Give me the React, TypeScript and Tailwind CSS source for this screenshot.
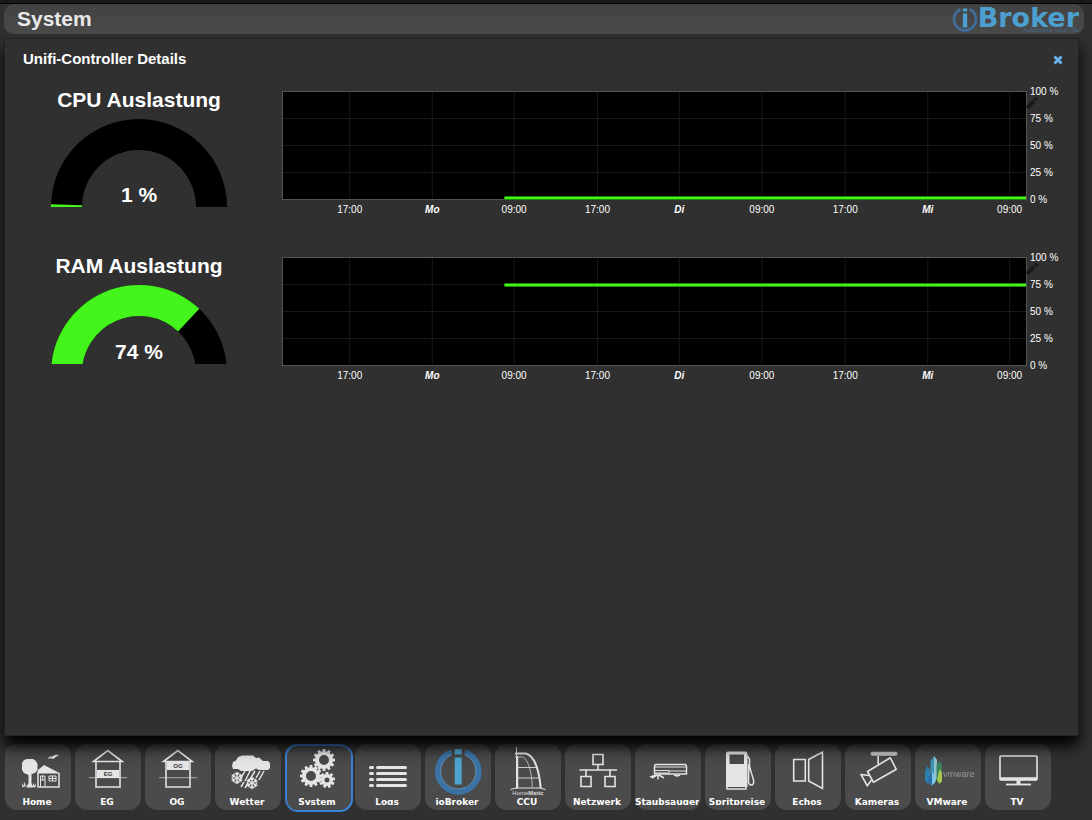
import type { ReactNode } from "react";

const TICKS = [
  { at: "9.1%", label: "17:00" },
  { at: "20.2%", label: "Mo", day: true },
  { at: "31.2%", label: "09:00" },
  { at: "42.4%", label: "17:00" },
  { at: "53.4%", label: "Di", day: true },
  { at: "64.5%", label: "09:00" },
  { at: "75.7%", label: "17:00" },
  { at: "86.8%", label: "Mi", day: true },
  { at: "97.8%", label: "09:00" },
];

const LEVELS = [100, 75, 50, 25, 0];

function Gauge({ title, value, cut = 0 }: { title: string; value: number; cut?: number }) {
  const cx = 88;
  const outer = 88;
  const inner = 57;

  // Ring segment between two fractions of the half circle
  const segment = (from: number, to: number) => {
    const a = Math.PI * (1 - from);
    const b = Math.PI * (1 - to);
    const p = (r: number, t: number) => `${cx + r * Math.cos(t)} ${88 - r * Math.sin(t)}`;
    return `M${p(outer, a)} A${outer} ${outer} 0 0 1 ${p(outer, b)} L${p(inner, b)} A${inner} ${inner} 0 0 0 ${p(inner, a)} Z`;
  };

  return (
    <div className="flex w-[276px] shrink-0 flex-col items-center">
      <h3 className="mb-[7px] text-[21px] leading-6 font-bold">{title}</h3>
      <svg width={176} height={88 - cut} className="block" role="img" aria-label={`${title} ${value} %`}>
        <path d={segment(0, 1)} fill="#000" />
        <path d={segment(0, value / 100)} fill="#43f51a" />
        <text x={88} y={83 - cut} textAnchor="middle" className="fill-white text-[21px] font-bold">
          {value} %
        </text>
      </svg>
    </div>
  );
}

function Chart({ value }: { value: number }) {
  const y = 108 - value * 1.08;

  return (
    <div className="min-w-0 flex-1 pt-[3px] pr-[52px]">
      <svg width="100%" height={130} className="block overflow-visible">
        <rect x={0} y={0} width="100%" height={108} fill="#000" stroke="#555" shapeRendering="crispEdges" />
        {LEVELS.slice(1, 4).map((l) => (
          <line key={l} x1={1} x2="100%" y1={108.5 - l * 1.08} y2={108.5 - l * 1.08} stroke="#191919" />
        ))}
        {TICKS.map((t) => (
          <g key={t.at}>
            <line x1={t.at} x2={t.at} y1={1} y2={107} stroke="#191919" />
            <text
              x={t.at}
              y={122}
              textAnchor="middle"
              className={t.day ? "fill-white text-[10px] font-bold italic" : "fill-white text-[10px]"}
            >
              {t.label}
            </text>
          </g>
        ))}
        <line x1="29.9%" x2="100%" y1={y} y2={y} stroke="#1d8a0a" strokeWidth={4} />
        <line x1="29.9%" x2="100%" y1={y} y2={y} stroke="#43f51a" strokeWidth={2} />
        <svg x="100%" className="overflow-visible">
          <path d="M1 17 8 10M9 9 11 7" stroke="#1a1a1a" strokeWidth={4} />
          {LEVELS.map((l) => (
            <text key={l} x={4} y={112 - l * 1.08} className="fill-white text-[10px]">
              {l} %
            </text>
          ))}
        </svg>
      </svg>
    </div>
  );
}

function Gear({ x, y, r, hole, teeth }: { x: number; y: number; r: number; hole: number; teeth: number }) {
  const body = r - 2;
  return (
    <g transform={`translate(${x} ${y})`}>
      {Array.from({ length: teeth }, (_, i) => (
        <rect key={i} x={-1.4} y={-r} width={2.8} height={4} fill="#e4e4e4" transform={`rotate(${(360 / teeth) * i})`} />
      ))}
      <circle r={(body + hole) / 2} fill="none" stroke="#e4e4e4" strokeWidth={body - hole} />
    </g>
  );
}

function Flake({ x, y }: { x: number; y: number }) {
  return (
    <g transform={`translate(${x} ${y})`} stroke="#e4e4e4" strokeWidth={1.4} fill="none">
      {[0, 60, 120].map((a) => (
        <path key={a} d="M0-6V6M-2-5 0-3 2-5M-2 5 0 3 2 5" transform={`rotate(${a})`} />
      ))}
    </g>
  );
}

function House({ label, y }: { label: string; y: number }) {
  return (
    <g fill="none" stroke="#e4e4e4" strokeWidth={1.6}>
      <path d="M14 33.7H52" stroke="#aaa" strokeWidth={1} />
      <path d="M18.5 17.5 32.8 6.5 47.2 17.5Z" />
      <path d="M21 17.5V43H45V17.5" />
      <rect x={22} y={y} width={22} height={8} fill="#e4e4e4" stroke="none" />
      <text x={33} y={y + 6} textAnchor="middle" stroke="none" fill="#333" className="text-[6px] font-bold">
        {label}
      </text>
    </g>
  );
}

const ITEMS: { label: string; active?: boolean; icon: ReactNode }[] = [
  {
    label: "Home",
    icon: (
      <g fill="#e4e4e4">
        <path d="M19 16 22 15H28L31 17 32.5 20V26L30 29 26.5 30V39L28 43.5H21L23.5 39V31L19 29 17 26V19Z" />
        <path d="M17.5 43.5 17 39 19 42 19.5 37.5 21 42M27 43 29 38.5 29 42 31 39.5 30.5 43.5" />
        <path d="M32 29.5 33 26 39 21 55.5 29.5Z" />
        <path d="M33 29V43H54V29" fill="none" stroke="#e4e4e4" strokeWidth={1.5} />
        <path d="M35.5 43V32H40V43M35.5 36H40M37.7 32V36M44 32H51V37H44ZM47.5 32V37M44 34.5H51" fill="none" stroke="#e4e4e4" />
        <path d="M42.5 15C44 12.5 46 12 47.5 12.8 49 11 51 10.5 54 11 51.5 12.5 50 13.2 48.5 15 46.5 14 44.5 14 42.5 15Z" />
      </g>
    ),
  },
  { label: "EG", icon: <House label="EG" y={26} /> },
  { label: "OG", icon: <House label="OG" y={18} /> },
  {
    label: "Wetter",
    icon: (
      <g>
        <path d="M17 22 18 18 21 16.5 23 13 27 11.5H38L41 14 44 13.5 48 17H53L55 19V24L53 26H44L41 24.5 37 27H26L23 25H18Z" fill="#e4e4e4" />
        <path d="M30 27 26 34M35 27 30 37M40 27 34 37M45 27 41 34M49 27 44 36M29 38 26 43M33 39 30 44M28 30 24 37" stroke="#e4e4e4" strokeWidth={1.5} />
        <Flake x={22} y={34} />
        <Flake x={37} y={39} />
      </g>
    ),
  },
  {
    label: "System",
    active: true,
    icon: (
      <g>
        <Gear x={39} y={16} r={11} hole={5} teeth={12} />
        <Gear x={26} y={32} r={11} hole={5} teeth={12} />
        <Gear x={42} y={36} r={8} hole={2.5} teeth={9} />
      </g>
    ),
  },
  {
    label: "Logs",
    icon: (
      <g stroke="#e4e4e4" strokeWidth={3} strokeLinecap="round">
        {[23.5, 29.5, 35.5, 41.5].map((y) => (
          <path key={y} d={`M15.5 ${y}H17.5M22.5 ${y}H50.5`} />
        ))}
      </g>
    ),
  },
  {
    label: "ioBroker",
    icon: (
      <g fill="none">
        <path d="M26.5 8.2A20.5 20.5 0 1 0 40 8.2" stroke="#3b73a5" strokeWidth={5.5} />
        <path d="M26.5 10.8A17.7 17.7 0 1 0 40 10.8" stroke="#6fa3cc" strokeWidth={0.7} />
        <path d="M33.2 5V10.5M33.2 13.5V40.5" stroke="#4fa3cf" strokeWidth={7} />
      </g>
    ),
  },
  {
    label: "CCU",
    icon: (
      <g fill="none" stroke="#e4e4e4">
        <path d="M21.5 3V45M15.5 45.5 21 44H45L50.5 45.5" />
        <path d="M20 9.5H31C39 12 44 25 45.7 44" strokeWidth={2} />
        <path d="M20 13H28C33 16 37 27 37.3 44" stroke="#bbb" />
        <path d="M21.5 23.5H41M21.5 34H44" stroke="#ccc" />
        <path d="M22.5 12V44" strokeWidth={1.5} />
        <text x={33} y={51} textAnchor="middle" stroke="none" fill="#ddd" className="text-[6px]">
          Home<tspan className="font-bold">Matic</tspan>
        </text>
      </g>
    ),
  },
  {
    label: "Netzwerk",
    icon: (
      <path
        d="M28 10.5H38V20.5H28ZM33 20.5V26M14.5 26H52M21 26V32M45 26V32M16 32.5H26V42.5H16ZM40 32.5H50V42.5H40Z"
        fill="none"
        stroke="#e4e4e4"
        strokeWidth={1.6}
      />
    ),
  },
  {
    label: "Staubsauger",
    icon: (
      <g fill="none" stroke="#e4e4e4" strokeWidth={1.5} strokeLinejoin="round">
        <path d="M20.5 20.5H50.5L51.5 22V30H19.5V22Z" />
        <path d="M20 23H51M20 26.5H34V29H20M34 27H51" strokeWidth={1} />
        <path d="M15 33 20 31.5M23 31V35.5M24 31 29 34M22 31 17 34M39 31 42 32 45 31" />
      </g>
    ),
  },
  {
    label: "Spritpreise",
    icon: (
      <g fill="none" stroke="#e4e4e4" strokeWidth={1.5}>
        <path d="M21 9 22.5 7.5H41L42.5 9V43H21ZM24.5 10.5V20H39V10.5Z" fill="#e4e4e4" fillRule="evenodd" stroke="none" />
        <path d="M22 43V45H41V43" />
        <path d="M42.5 12 44.5 15V22C46 29 48.5 34 48.8 38 48.5 42 44 42 43.5 38L43.8 20" />
      </g>
    ),
  },
  {
    label: "Echos",
    icon: <path d="M18.7 15.5H30.3V37H18.7ZM33.7 15.5 47.5 8V44.5L33.7 37Z" fill="none" stroke="#e4e4e4" strokeWidth={1.6} />,
  },
  {
    label: "Kameras",
    icon: (
      <g fill="none" stroke="#e4e4e4" strokeWidth={1.6} strokeLinejoin="round">
        <path d="M27.5 9.8H50.5" stroke="#c4c4c4" strokeWidth={4} strokeLinecap="round" />
        <path d="M33.2 12V20" />
        <path d="M22.5 27.5 45.3 13.8 51.3 25.3 28.5 38.3Z" />
        <path d="M24.5 31.5 16 30.5 22.3 41.8 26.8 35.5" />
      </g>
    ),
  },
  {
    label: "VMware",
    icon: (
      <g>
        <path d="M19 12 22 16V34L19 39 15.5 34V17Z" fill="#3e93b7" />
        <path d="M19 12 22 16V34L19 39Z" fill="#8fc4cf" />
        <path d="M12.5 22 15 26V36L12.5 40 10 36V27Z" fill="#2b7fae" />
        <path d="M24.5 17 27 21V37L24.5 40 21.5 36V21Z" fill="#39835f" />
        <path d="M24.5 25 27 29V37L24.5 40 22 36Z" fill="#a8c64a" />
        <path d="M17 28 20.5 32V38L17 41.5 13 38V32Z" fill="#7fc3e0" />
        <path d="M17 28V41.5L13 38V32Z" fill="#2a6ea6" />
        <text x={28} y={33} fill="#969696" className="text-[9px]">
          vmware
        </text>
      </g>
    ),
  },
  {
    label: "TV",
    icon: (
      <g fill="none" stroke="#e4e4e4" strokeWidth={1.6}>
        <rect x={15} y={12} width={37} height={24} rx={1} />
        <path d="M15 34.8H52" strokeWidth={3} />
        <path d="M33.5 36V40" strokeWidth={4} />
        <path d="M21 40.5H46" strokeWidth={1.8} />
      </g>
    ),
  },
];

function Logo() {
  return (
    <div className="flex items-start text-[#4c9fce]">
      <svg width={26} height={28} viewBox="0 0 26 28" className="block" aria-hidden="true">
        <path d="M8.5 4.3A11 11 0 1 0 17.5 4.3" fill="none" stroke="#3f6f9d" strokeWidth={2.6} />
        <path d="M13 3.5V6.5M13 8.5V22.5" stroke="#4c9fce" strokeWidth={4.4} />
      </svg>
      <div className="flex flex-col items-end font-['DejaVu_Sans',sans-serif]">
        <span className="h-[21px] text-[27px] leading-[25px] font-bold">Broker</span>
        <span className="text-[6px] leading-[7px] text-[#44698c]">Automate your life</span>
      </div>
    </div>
  );
}

export default function App() {
  return (
    <div className="flex min-h-screen flex-col border-t-[3px] border-[#1a1a1a] bg-[#303030] font-['Liberation_Sans',Arial,sans-serif] text-white">
      <div className="border-t border-black pr-2 pl-1">
        <header className="flex h-[30px] items-center justify-between rounded-[10px] bg-linear-to-b from-[#424242] to-[#4b4b4b] pr-[5px] pl-[13px]">
          <h1 className="text-[21px] leading-6 font-bold text-[#e8e8e8]">System</h1>
          <Logo />
        </header>
      </div>

      <main className="z-10 mt-1 mr-[13px] ml-1 flex-1 border border-[#222] bg-[#303030] pt-2 shadow-[0_10px_14px_0_#000]">
        <div className="flex h-6 items-center justify-between pr-[14px] pl-[18px]">
          <h2 className="text-[15px] leading-6 font-bold">Unifi-Controller Details</h2>
          <button type="button" aria-label="Schließen" className="mt-0.5 flex size-3 items-center justify-center">
            <svg width={10} height={10} viewBox="0 0 10 10" className="block">
              <path d="M1.5 1.5 8.5 8.5M8.5 1.5 1.5 8.5" stroke="#6cb2ea" strokeWidth={3} />
            </svg>
          </button>
        </div>
        <section className="mt-[17px] flex h-[166px]">
          <div className="-ml-1 w-[281px] shrink-0">
            <Gauge title="CPU Auslastung" value={1} />
          </div>
          <Chart value={1} />
        </section>
        <section className="flex h-[166px]">
          <div className="-ml-1 w-[281px] shrink-0">
            <Gauge title="RAM Auslastung" value={74} cut={9} />
          </div>
          <Chart value={74} />
        </section>
      </main>

      <nav className="mt-2 flex flex-wrap gap-1 pb-[10px] pl-[5px]">
        {ITEMS.map((item) => (
          <button
            key={item.label}
            type="button"
            className={
              item.active
                ? "h-[66px] w-[66px] rounded-xl bg-linear-to-b from-[#444] to-[#4b4b4b] to-40% shadow-[inset_1px_1px_0_1px_#3a82d6,1px_1px_0_1px_#3a82d6]"
                : "h-[66px] w-[66px] rounded-xl bg-linear-to-b from-[#444] to-[#4b4b4b] to-40%"
            }
          >
            <svg width={66} height={52} viewBox="0 0 66 52" className="block" aria-hidden="true">
              {item.icon}
            </svg>
            <span className="mb-[5px] block h-[9px] w-16 overflow-hidden text-center font-['DejaVu_Sans',sans-serif] text-[9px] leading-[13px] font-bold">
              {item.label}
            </span>
          </button>
        ))}
      </nav>
    </div>
  );
}
